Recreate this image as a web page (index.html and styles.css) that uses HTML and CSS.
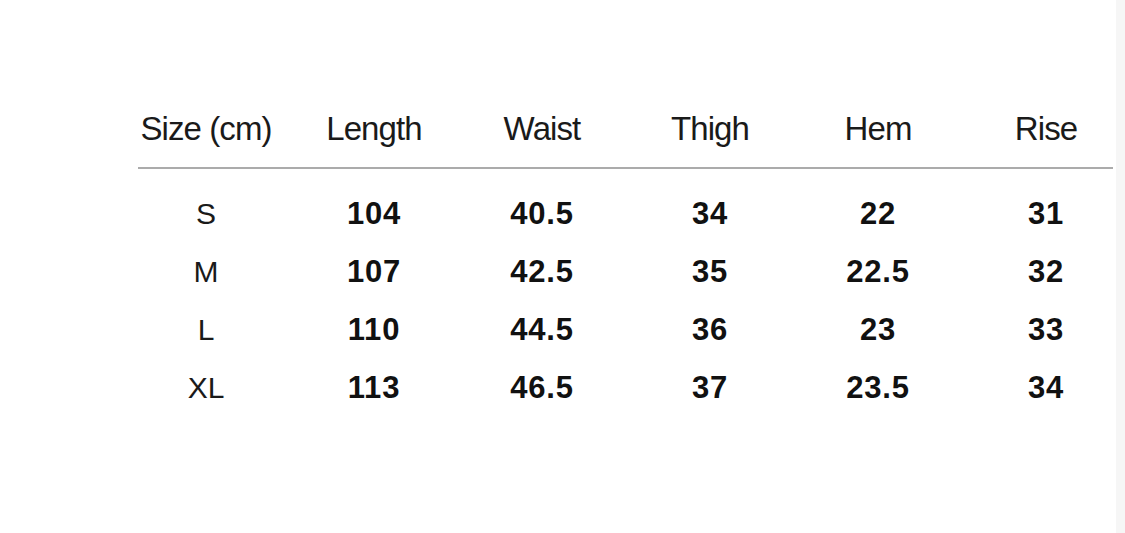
FILE: index.html
```html
<!DOCTYPE html>
<html lang="en">
<head>
<meta charset="utf-8">
<title>Size chart</title>
<link rel="stylesheet" href="styles.css">
</head>
<body>
<div class="page">
  <main class="main">
    <div class="chart">
      <div class="row head">
        <div class="cell">Size (cm)</div>
        <div class="cell">Length</div>
        <div class="cell">Waist</div>
        <div class="cell">Thigh</div>
        <div class="cell">Hem</div>
        <div class="cell">Rise</div>
      </div>
      <div class="divider"></div>
      <div class="body">
        <div class="row data">
          <div class="cell size">S</div>
          <div class="cell">104</div>
          <div class="cell">40.5</div>
          <div class="cell">34</div>
          <div class="cell">22</div>
          <div class="cell">31</div>
        </div>
        <div class="row data">
          <div class="cell size">M</div>
          <div class="cell">107</div>
          <div class="cell">42.5</div>
          <div class="cell">35</div>
          <div class="cell">22.5</div>
          <div class="cell">32</div>
        </div>
        <div class="row data">
          <div class="cell size">L</div>
          <div class="cell">110</div>
          <div class="cell">44.5</div>
          <div class="cell">36</div>
          <div class="cell">23</div>
          <div class="cell">33</div>
        </div>
        <div class="row data">
          <div class="cell size">XL</div>
          <div class="cell">113</div>
          <div class="cell">46.5</div>
          <div class="cell">37</div>
          <div class="cell">23.5</div>
          <div class="cell">34</div>
        </div>
      </div>
    </div>
  </main>
  <aside class="side"></aside>
</div>
</body>
</html>
```
FILE: styles.css
```css
html, body {
  margin: 0;
  padding: 0;
  background: #ffffff;
  overflow: hidden;
}

.page {
  display: flex;
  width: 1125px;
  height: 533px;
}

.main {
  flex: 1;
  padding: 109px 0 0 136px;
  font-family: "Liberation Sans", Arial, Helvetica, sans-serif;
  color: #151515;
}

.side {
  width: 11px;
  background: #f6f6f6;
}

.chart {
  width: 980px;
}

.row {
  display: grid;
  grid-template-columns: repeat(6, 140px);
  column-gap: 28px;
}

.cell {
  text-align: center;
  white-space: nowrap;
}

.head .cell {
  font-size: 33px;
  line-height: 40px;
  letter-spacing: -0.9px;
  color: #1a1a1a;
}

.divider {
  margin: 18px 0 0 2px;
  width: 975px;
  height: 2px;
  background: #ababab;
}

.body {
  padding-top: 16px;
}

.data .cell {
  font-size: 31px;
  line-height: 58px;
  font-weight: 700;
  letter-spacing: 0.8px;
  color: #111111;
}

.data .cell.size {
  font-size: 30px;
  font-weight: 400;
  letter-spacing: 0;
  color: #1a1a1a;
}
```
